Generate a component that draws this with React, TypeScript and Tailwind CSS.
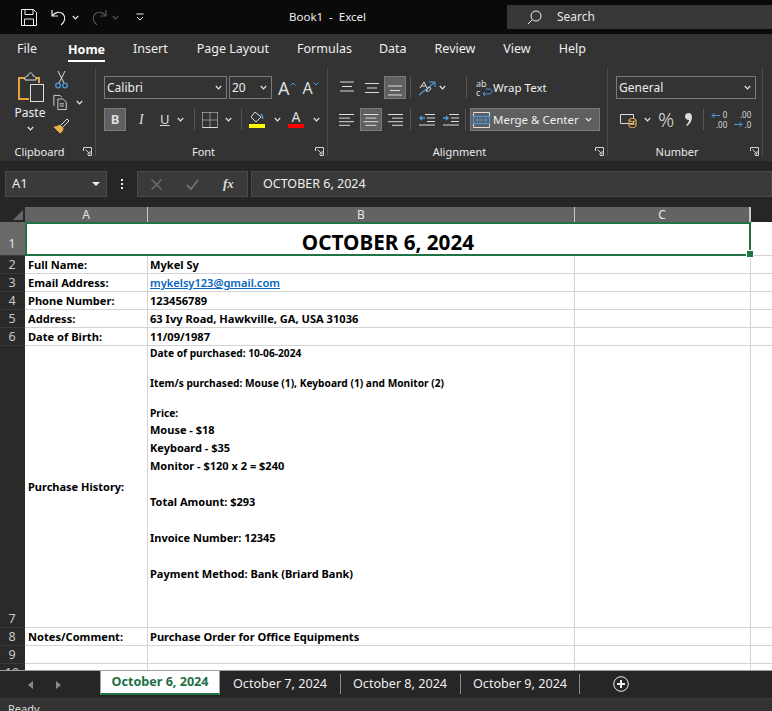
import type { ReactNode } from "react";

const ui = { fontFamily: '"Noto Sans", "Open Sans", sans-serif' };

function Chev({ className = "" }: { className?: string }) {
  return (
    <svg width="7" height="5" viewBox="0 0 7 5" className={`shrink-0 ${className}`} fill="none" stroke="#e6e6e6" strokeWidth="1.2">
      <path d="M0.8 1 3.5 3.8 6.2 1" />
    </svg>
  );
}

function Launcher() {
  return (
    <svg width="9" height="9" viewBox="0 0 9 9" fill="none" stroke="#d0d0d0" strokeWidth="1">
      <path d="M.5 4V.5h8v8H5M2.5 2.5 7 7M7 4v3H4" />
    </svg>
  );
}

function Lines({ kind }: { kind: "center" | "left" | "right" }) {
  return (
    <svg width="16" height="14" viewBox="0 0 16 14" stroke="#dcdcdc" strokeWidth="1">
      {[0, 1, 2, 3].map((i) => {
        const w = i % 2 === 0 ? 15 : 11;
        const x = kind === "left" ? 0 : kind === "right" ? 16 - w : (16 - w) / 2;
        return <path key={i} d={`M${x} ${1.5 + i * 3.6}h${w}`} />;
      })}
    </svg>
  );
}

function VAlign({ rows, top }: { rows: number[]; top: number }) {
  return (
    <svg width="16" height="16" viewBox="0 0 16 16" stroke="#dcdcdc" strokeWidth="1">
      {rows.map((w, i) => (
        <path key={i} d={`M${(16 - w) / 2} ${top + i * 4.5}h${w}`} />
      ))}
    </svg>
  );
}

function Sep({ className = "" }: { className?: string }) {
  return <div className={`w-px h-[21px] bg-[#555] shrink-0 ${className}`} />;
}

function Group({ width, label, children }: { width: string; label: string; children: ReactNode }) {
  return (
    <div className={`${width} shrink-0 flex flex-col border-r border-[#4c4c4c] mb-[5px]`}>
      <div className="h-[76px] shrink-0">{children}</div>
      <div className="relative pr-[16px] text-center text-[11px] leading-[16px] text-[#eaeaea]">
        {label}
        <span className="absolute right-[3px] top-[3px] flex">
          <Launcher />
        </span>
      </div>
    </div>
  );
}

function ClipboardGroup() {
  return (
    <Group width="w-[96px]" label="Clipboard">
      <div className="flex">
        <div className="ml-[15px] w-[30px] flex flex-col items-center pt-[4px]">
          <svg width="28" height="30" viewBox="0 0 28 30" fill="none">
            <path d="M3 6h6M20 6h3v5" stroke="#e8a33d" strokeWidth="2" />
            <path d="M3 5v22h10" stroke="#e8a33d" strokeWidth="2" />
            <path d="M9 6c0-1 1-2 3-2 0-2 1-3 2.500-3s2.500 1 2.500 3c2 0 3 1 3 2v2H9z" stroke="#ddd" fill="#333" />
            <rect x="14.500" y="12.500" width="13" height="17" fill="#333" stroke="#ddd" />
          </svg>
          <span className="mt-[3px] text-[12px] leading-[16px] text-[#eee]">Paste</span>
          <Chev className="mt-[5px]" />
        </div>
        <div className="ml-[8px] flex flex-col w-[30px] pt-[3px]">
          <svg width="13" height="18" viewBox="0 0 13 18" fill="none" className="ml-[2px]">
            <path d="M3 0l6 12M10 0 4 12" stroke="#ddd" />
            <circle cx="3" cy="14.500" r="2.300" stroke="#4a9be0" strokeWidth="1.300" />
            <circle cx="10" cy="14.500" r="2.300" stroke="#4a9be0" strokeWidth="1.300" />
          </svg>
          <div className="mt-[5px] flex items-center gap-[8px]">
            <svg width="17" height="17" viewBox="0 0 17 17" fill="none" stroke="#ddd">
              <path d="M1 12.500V.5h7l2 2M5.500 4.500h6l3.500 3.500v8.500H5.500z" />
              <path d="M7.500 10h5M7.500 12.500h5" />
            </svg>
            <Chev />
          </div>
          <svg width="17" height="16" viewBox="0 0 17 16" fill="none" className="mt-[7px]">
            <path d="M1 9l6 6c2-1 3-3 3-5L7 7C5 8 3 9 1 9z" fill="#e8b04a" stroke="#e8b04a" />
            <path d="M8 7l6-6 2 2-6 6" stroke="#ddd" />
          </svg>
        </div>
      </div>
    </Group>
  );
}

function Combo({ width, text }: { width: string; text: string }) {
  return (
    <div className={`${width} h-[23px] shrink-0 border border-[#7b7b7b] flex items-center justify-between pl-[2px] pr-[4px] text-[12px] text-[#eee]`}>
      <span>{text}</span>
      <Chev />
    </div>
  );
}

function FontGroup() {
  return (
    <Group width="w-[232px]" label="Font">
      <div className="flex flex-col pt-[8px] pl-[8px]">
        <div className="flex items-center h-[23px]">
          <Combo width="w-[123px]" text="Calibri" />
          <Combo width="w-[43px] ml-[2px]" text="20" />
          <span className="ml-[6px] text-[18px] leading-none text-[#ddd]">A</span>
          <svg width="6" height="4" viewBox="0 0 6 4" fill="none" stroke="#4a9be0" className="mb-[8px]"><path d="M.5 3.500 3 1l2.500 2.500" /></svg>
          <span className="ml-[7px] text-[16px] leading-none text-[#ddd]">A</span>
          <svg width="6" height="4" viewBox="0 0 6 4" fill="none" stroke="#4a9be0" className="mb-[8px]"><path d="M.5.5 3 3 5.500.5" /></svg>
        </div>
        <div className="flex items-center h-[23px] mt-[9px] text-[#ddd]">
          <div className="w-[22px] h-[23px] bg-[#5f5f5f] border border-[#7b7b7b] flex items-center justify-center font-bold text-[13px] text-[#ddd]">B</div>
          <span className="ml-[13px] w-[8px] italic text-[14px]" style={{ fontFamily: '"Liberation Serif", serif' }}>I</span>
          <span className="ml-[13px] w-[10px] underline text-[13px] leading-none">U</span>
          <Chev className="ml-[7px]" />
          <Sep className="ml-[10px]" />
          <svg width="16" height="16" viewBox="0 0 16 16" fill="none" stroke="#ddd" className="ml-[7px]">
            <path d="M.5.5h15M.5.5v15M15.500.5v15M.5 8h15M8 .5v15" strokeDasharray="1 1" />
            <path d="M.5 15.500h15" />
          </svg>
          <Chev className="ml-[7px]" />
          <Sep className="ml-[9px]" />
          <div className="ml-[7px] w-[16px] flex flex-col items-center">
            <svg width="14" height="12" viewBox="0 0 14 12" fill="none">
              <path d="M5 1 1 6l5 5 5-5z" stroke="#ddd" />
              <path d="M11 3c1 1 2 3 1.500 5" stroke="#4a9be0" strokeWidth="1.500" />
            </svg>
            <div className="mt-[1px] w-[16px] h-[4px] bg-[#ffff00]" />
          </div>
          <Chev className="ml-[9px]" />
          <div className="ml-[7px] w-[16px] flex flex-col items-center">
            <span className="text-[14px] leading-[12px] text-[#ddd]">A</span>
            <div className="mt-[1px] w-[16px] h-[4px] bg-[#ff0000]" />
          </div>
          <Chev className="ml-[9px]" />
        </div>
      </div>
    </Group>
  );
}

function IconCell({ active = false, children }: { active?: boolean; children: ReactNode }) {
  return (
    <div className={`w-[22px] h-[23px] flex items-center justify-center shrink-0 ${active ? "bg-[#5f5f5f] border border-[#7b7b7b]" : ""}`}>
      {children}
    </div>
  );
}

function AlignmentGroup() {
  return (
    <Group width="w-[280px]" label="Alignment">
      <div className="flex flex-col pt-[8px] pl-[8px]">
        <div className="flex items-center h-[23px]">
          <IconCell><VAlign rows={[14, 10, 14]} top={2} /></IconCell>
          <span className="w-[3px]" />
          <IconCell><VAlign rows={[14, 10, 14]} top={3.500} /></IconCell>
          <span className="w-px" />
          <IconCell active><VAlign rows={[14, 10, 14]} top={6} /></IconCell>
          <Sep className="ml-[4px]" />
          <svg width="18" height="16" viewBox="0 0 18 16" fill="none" className="ml-[7px] shrink-0">
            <path d="M1 15 16 3M11 2h6v5" stroke="#4a9be0" strokeWidth="1.200" />
            <path d="M2 8 6 2l3 6M3.500 6h4M8 11l3-4c2 0 2 2 1 3s-2 2-4 1z" stroke="#ddd" />
          </svg>
          <Chev className="ml-[3px]" />
          <Sep className="ml-[20px]" />
          <div className="ml-[9px] w-[17px] h-[18px] relative shrink-0 text-[9px] leading-[8px] text-[#ddd]">
            <span className="absolute left-0 top-[1px]">ab</span>
            <span className="absolute left-0 top-[10px]">c</span>
            <svg width="11" height="10" viewBox="0 0 11 10" fill="none" stroke="#4a9be0" className="absolute right-0 bottom-0">
              <path d="M1 7h6c4 0 4-5 0-5H4M3 5 1 7l2 2" />
            </svg>
          </div>
          <span className="text-[11.5px] text-[#eee] whitespace-nowrap">Wrap Text</span>
        </div>
        <div className="flex items-center h-[23px] mt-[9px]">
          <IconCell><Lines kind="left" /></IconCell>
          <span className="w-[2px]" />
          <IconCell active><Lines kind="center" /></IconCell>
          <span className="w-[2px]" />
          <IconCell><Lines kind="right" /></IconCell>
          <Sep className="ml-[4px]" />
          <svg width="16" height="14" viewBox="0 0 16 14" fill="none" stroke="#ddd" className="ml-[8px] shrink-0">
            <path d="M6 1.500h10M8 5h8M8 8.500h8M0 12h16" />
            <path d="M6 5H1M3 3 1 5l2 2" stroke="#4a9be0" strokeWidth="1.400" />
          </svg>
          <svg width="16" height="14" viewBox="0 0 16 14" fill="none" stroke="#ddd" className="ml-[8px] shrink-0">
            <path d="M6 1.500h10M8 5h8M8 8.500h8M0 12h16" />
            <path d="M0 5h5M3 3l2 2-2 2" stroke="#4a9be0" strokeWidth="1.400" />
          </svg>
          <Sep className="ml-[6px]" />
          <div className="ml-[4px] w-[130px] h-[23px] shrink-0 bg-[#5f5f5f] border border-[#7b7b7b] flex items-center pl-[2px] pr-[7px] justify-between">
            <svg width="17" height="16" viewBox="0 0 17 16" fill="none" stroke="#ddd" className="shrink-0">
              <path d="M.5.5h16v15H.5z" />
              <rect x="0.500" y="4.500" width="16" height="7" stroke="#4a9be0" strokeWidth="1.200" />
              <path d="M3 8h11M5 6 3 8l2 2M12 6l2 2-2 2" stroke="#4a9be0" />
            </svg>
            <span className="ml-[3px] text-[11.5px] text-[#f0f0f0] flex-1 whitespace-nowrap">Merge &amp; Center</span>
            <Chev />
          </div>
        </div>
      </div>
    </Group>
  );
}

function NumberGroup() {
  return (
    <Group width="w-[155px]" label="Number">
      <div className="flex flex-col pt-[8px] pl-[8px]">
        <Combo width="w-[140px]" text="General" />
        <div className="flex items-center h-[23px] mt-[9px] text-[#ddd]">
          <svg width="17" height="16" viewBox="0 0 17 16" fill="none" className="ml-[4px] shrink-0">
            <path d="M.5 2.500h13v9H.5z" stroke="#ddd" />
            <ellipse cx="12.500" cy="8" rx="3.500" ry="1.500" fill="#333" stroke="#e8b04a" />
            <path d="M9 8v6c0 2 7 2 7 0V8M9 11c0 2 7 2 7 0" stroke="#e8b04a" />
          </svg>
          <Chev className="ml-[7px]" />
          <span className="ml-[7px] text-[20px] leading-none font-light">%</span>
          <svg width="7" height="13" viewBox="0 0 7 13" fill="#ddd" className="ml-[11px] shrink-0"><path d="M3.500 0C6 0 7 2 7 4c0 4-2 7-5 9l-1-1c2-2 3-3 3-5C1.500 7 0 5.500 0 3.500S1.500 0 3.500 0z" /></svg>
          <Sep className="ml-[11px]" />
          <div className="ml-[7px] w-[16px] h-[16px] relative shrink-0">
            <span className="absolute right-0 top-[-2px] text-[8px] leading-[10px]">0</span>
            <span className="absolute right-0 top-[8px] text-[8px] leading-[10px]">.00</span>
            <svg width="9" height="7" viewBox="0 0 9 7" fill="none" stroke="#4a9be0" className="absolute left-0 top-0"><path d="M9 3.500H1M3.500 1 1 3.500 3.500 6" /></svg>
          </div>
          <div className="ml-[7px] w-[17px] h-[16px] relative shrink-0">
            <span className="absolute right-0 top-[-2px] text-[8px] leading-[10px]">.00</span>
            <span className="absolute right-0 top-[8px] text-[8px] leading-[10px]">.0</span>
            <svg width="9" height="7" viewBox="0 0 9 7" fill="none" stroke="#4a9be0" className="absolute left-0 bottom-0"><path d="M0 3.500h8M5.500 1 8 3.500 5.500 6" /></svg>
          </div>
        </div>
      </div>
    </Group>
  );
}

function TitleBar() {
  return (
    <div className="h-[34px] bg-[#0a0a0a] flex items-center text-white shrink-0">
      <svg width="16" height="17" viewBox="0 0 16 17" fill="none" stroke="#eee" className="ml-[21px] shrink-0">
        <path d="M.5.5h12l3 3v13H.5z" />
        <path d="M4 .5v5h8v-5M3.500 16.500V10h9v6.500" />
      </svg>
      <svg width="16" height="17" viewBox="0 0 16 17" fill="none" stroke="#eee" strokeWidth="1.200" className="ml-[14px] shrink-0">
        <path d="M1 1v6h6M1 7c3-4 8-5 11-2s2 8-2 11" />
      </svg>
      <Chev className="ml-[5px]" />
      <svg width="16" height="17" viewBox="0 0 16 17" fill="none" stroke="#555" strokeWidth="1.200" className="ml-[12px] shrink-0">
        <path d="M15 1v6H9M15 7c-3-4-8-5-11-2s-2 8 2 11" />
      </svg>
      <svg width="7" height="5" viewBox="0 0 7 5" fill="none" stroke="#555" strokeWidth="1.200" className="ml-[5px] shrink-0"><path d="M.8 1 3.500 3.800 6.200 1" /></svg>
      <svg width="8" height="8" viewBox="0 0 8 8" fill="none" stroke="#eee" className="ml-[17px] shrink-0"><path d="M.5 1h7M1 4l3 3 3-3" /></svg>
      <span className="ml-[145px] text-[11.5px] text-[#eee] whitespace-pre">Book1  -  Excel</span>
      <div className="ml-auto w-[265px] shrink-0 h-[24px] bg-[#373737] flex items-center text-[12px] text-[#e6e6e6]">
        <svg width="15" height="15" viewBox="0 0 15 15" fill="none" stroke="#eee" className="ml-[20px] shrink-0"><circle cx="9" cy="6" r="5" /><path d="M5.500 9.500 1 14" /></svg>
        <span className="ml-[15px]">Search</span>
      </div>
    </div>
  );
}

function MenuTabs() {
  return (
    <div className="h-[34px] shrink-0 flex items-center pb-[4px] text-[12.5px] text-[#eee]">
      <span className="ml-[17px]">File</span>
      <span className="ml-[31px] h-[24px] pt-[2px] font-bold text-white border-b-2 border-white leading-[19px] relative top-[1px]">Home</span>
      <span className="ml-[28px]">Insert</span>
      <span className="ml-[29px]">Page Layout</span>
      <span className="ml-[28px]">Formulas</span>
      <span className="ml-[27px]">Data</span>
      <span className="ml-[28px]">Review</span>
      <span className="ml-[28px]">View</span>
      <span className="ml-[28px]">Help</span>
    </div>
  );
}

function FormulaBar() {
  return (
    <div className="h-[46px] shrink-0 bg-[#262626] flex pt-[10px] text-[12.5px]">
      <div className="ml-[5px] w-[102px] h-[26px] bg-[#3a3a3a] border border-[#4a4a4a] flex items-center justify-between pl-[6px] pr-[6px] text-[13px] text-[#eee]">
        <span>A1</span>
        <svg width="8" height="4" viewBox="0 0 8 4" fill="#eee"><path d="M0 0h8L4 4z" /></svg>
      </div>
      <div className="w-[30px] h-[26px] flex flex-col items-center justify-center gap-[2px]">
        <i className="w-[2px] h-[2px] bg-[#eee]" />
        <i className="w-[2px] h-[2px] bg-[#eee]" />
        <i className="w-[2px] h-[2px] bg-[#eee]" />
      </div>
      <div className="w-[111px] h-[26px] bg-[#3a3a3a] border border-[#4a4a4a] flex items-center shrink-0">
        <svg width="11" height="11" viewBox="0 0 11 11" fill="none" stroke="#6e6e6e" strokeWidth="1.500" className="ml-[13px]"><path d="M.5.5l10 10M10.500.5l-10 10" /></svg>
        <svg width="13" height="11" viewBox="0 0 13 11" fill="none" stroke="#6e6e6e" strokeWidth="2" className="ml-[24px]"><path d="M1 6l4 4 7-9" /></svg>
        <span className="ml-[24px] italic font-bold text-[13px] text-[#ddd]" style={{ fontFamily: '"Liberation Serif", serif' }}>fx</span>
      </div>
      <div className="ml-[3px] flex-1 h-[26px] bg-[#3a3a3a] border border-[#4a4a4a] flex items-center pl-[11px] text-[#eee]">OCTOBER 6, 2024</div>
    </div>
  );
}

function RowHead({ n, h, active = false }: { n: number; h: string; active?: boolean }) {
  return (
    <div className={`${h} flex items-end justify-center pr-[1px] text-[12.5px] leading-[17px] border-b border-[#3a3a3a] ${active ? "bg-[#696969] text-[#e6e6e6] pb-[3px]" : "bg-[#2a2a2a] text-[#c8c8c8]"}`}>
      {n}
    </div>
  );
}

function Row({ n, a, b, link = false }: { n: number; a?: string; b?: string; link?: boolean }) {
  return (
    <>
      <RowHead n={n} h="h-[18px]" />
      <div className="h-[18px] bg-white border-r border-b border-[#d4d4d4] pl-[3px] text-[11.1px] font-bold leading-[17px] text-black whitespace-nowrap overflow-hidden">{a}</div>
      <div className={`h-[18px] bg-white border-r border-b border-[#d4d4d4] pl-[2px] text-[11.1px] leading-[17px] whitespace-nowrap ${link ? "text-[#0563c1] underline font-semibold" : "font-bold text-black"}`}>{b}</div>
      <div className="h-[18px] bg-white border-r border-b border-[#d4d4d4]" />
      <div className="h-[18px] bg-white border-b border-[#d4d4d4]" />
    </>
  );
}

const purchaseLines: [string, string][] = [
  ["Date of purchased: 10-06-2024", "s"],
  ["", "s"],
  ["Item/s purchased: Mouse (1), Keyboard (1) and Monitor (2)", "s"],
  ["", "s"],
  ["Price:", "s"],
  ["Mouse - $18", "l"],
  ["Keyboard - $35", "l"],
  ["Monitor - $120 x 2 = $240", "l"],
  ["", "l"],
  ["Total Amount: $293", "l"],
  ["", "l"],
  ["Invoice Number: 12345", "l"],
  ["", "l"],
  ["Payment Method: Bank (Briard Bank)", "l"],
];

function Sheet() {
  return (
    <div className="h-[463px] shrink-0 overflow-hidden bg-white grid grid-cols-[25px_123px_427px_176px_1fr] content-start">
      {/* column headers */}
      <div className="h-[15px] bg-[#262626] flex items-end justify-end pr-[2px] pb-[2px]">
        <svg width="10" height="10" viewBox="0 0 10 10" fill="#666"><path d="M10 0v10H0z" /></svg>
      </div>
      <div className="h-[15px] bg-[#636363] border-r border-[#c8c8c8] text-center text-[12px] leading-[15px] text-[#e6e6e6]">A</div>
      <div className="h-[15px] bg-[#636363] border-r border-[#c8c8c8] text-center text-[12px] leading-[15px] text-[#e6e6e6]">B</div>
      <div className="h-[15px] bg-[#636363] border-r-2 border-[#c8c8c8] text-center text-[12px] leading-[15px] text-[#e6e6e6]">C</div>
      <div className="h-[15px] bg-[#262626]" />

      {/* row 1, merged A:C */}
      <RowHead n={1} h="h-[34px]" active />
      <div className="col-span-3 h-[34px] bg-white border-2 border-[#217346] relative flex items-center justify-center pt-[5px] text-[20.7px] leading-[24px] font-bold text-black">
        OCTOBER 6, 2024
        <span className="absolute right-[-5px] bottom-[-4px] w-[6px] h-[6px] bg-[#217346] border border-white box-content" />
      </div>
      <div className="h-[34px] bg-white border-b border-[#d4d4d4]" />

      <Row n={2} a="Full Name:" b="Mykel Sy" />
      <Row n={3} a="Email Address:" b="mykelsy123@gmail.com" link />
      <Row n={4} a="Phone Number:" b="123456789" />
      <Row n={5} a="Address:" b="63 Ivy Road, Hawkville, GA, USA 31036" />
      <Row n={6} a="Date of Birth:" b="11/09/1987" />

      {/* row 7, tall purchase history cell */}
      <RowHead n={7} h="h-[282px]" />
      <div className="h-[282px] border-r border-b border-[#d4d4d4] pl-[3px] pt-[2px] text-[11px] font-bold text-black flex items-center">Purchase History:</div>
      <div className="h-[282px] border-r border-b border-[#d4d4d4] pl-[2px] font-bold text-black">
        {purchaseLines.map(([t, s], i) => (
          <div key={i} className={s === "s" ? "h-[15px] text-[10.2px] leading-[15px]" : "h-[18px] text-[11px] leading-[18px]"}>
            {t}
          </div>
        ))}
      </div>
      <div className="h-[282px] border-r border-b border-[#d4d4d4]" />
      <div className="h-[282px] border-b border-[#d4d4d4]" />

      <Row n={8} a="Notes/Comment:" b="Purchase Order for Office Equipments" />
      <Row n={9} />
      <Row n={10} />
    </div>
  );
}

function TabSep() {
  return <div className="w-px h-[20px] bg-[#8a8a8a] shrink-0" />;
}

function SheetTabs() {
  return (
    <div className="h-[28px] shrink-0 bg-[#262626] border-t border-[#a0a0a0] flex items-start text-[12.6px] text-[#eee]">
      <svg width="5" height="8" viewBox="0 0 5 8" fill="#8a8a8a" className="ml-[28px] mt-[10px]"><path d="M5 0v8L0 4z" /></svg>
      <svg width="5" height="8" viewBox="0 0 5 8" fill="#8a8a8a" className="ml-[23px] mt-[10px]"><path d="M0 0v8l5-4z" /></svg>
      <div className="ml-[39px] w-[120px] h-[24px] bg-white border-l border-r border-[#a0a0a0] border-b-2 border-b-[#217346] text-center font-bold text-[#1e6e46] leading-[22px]">October 6, 2024</div>
      <div className="ml-[13px] w-[94px] leading-[25px] whitespace-nowrap">October 7, 2024</div>
      <div className="ml-[13px] mt-[3px]"><TabSep /></div>
      <div className="ml-[12px] w-[94px] leading-[25px] whitespace-nowrap">October 8, 2024</div>
      <div className="ml-[13px] mt-[3px]"><TabSep /></div>
      <div className="ml-[12px] w-[94px] leading-[25px] whitespace-nowrap">October 9, 2024</div>
      <div className="ml-[12px] mt-[3px]"><TabSep /></div>
      <svg width="16" height="16" viewBox="0 0 16 16" fill="none" stroke="#eee" className="ml-[33px] mt-[5px]">
        <circle cx="8" cy="8" r="7.300" />
        <path d="M8 4v8M4 8h8" strokeWidth="2" />
      </svg>
    </div>
  );
}

export default function App() {
  return (
    <div className="w-full h-[711px] overflow-hidden bg-[#333333] flex flex-col" style={ui}>
      <TitleBar />
      <MenuTabs />
      <div className="h-[93px] shrink-0 flex bg-[#333333]">
        <ClipboardGroup />
        <FontGroup />
        <AlignmentGroup />
        <NumberGroup />
      </div>
      <FormulaBar />
      <Sheet />
      <SheetTabs />
      <div className="h-[13px] shrink-0 bg-[#333333] pl-[8px] text-[11px] leading-[20px] text-[#ddd] border-t border-[#3a3a3a]">Ready</div>
    </div>
  );
}
